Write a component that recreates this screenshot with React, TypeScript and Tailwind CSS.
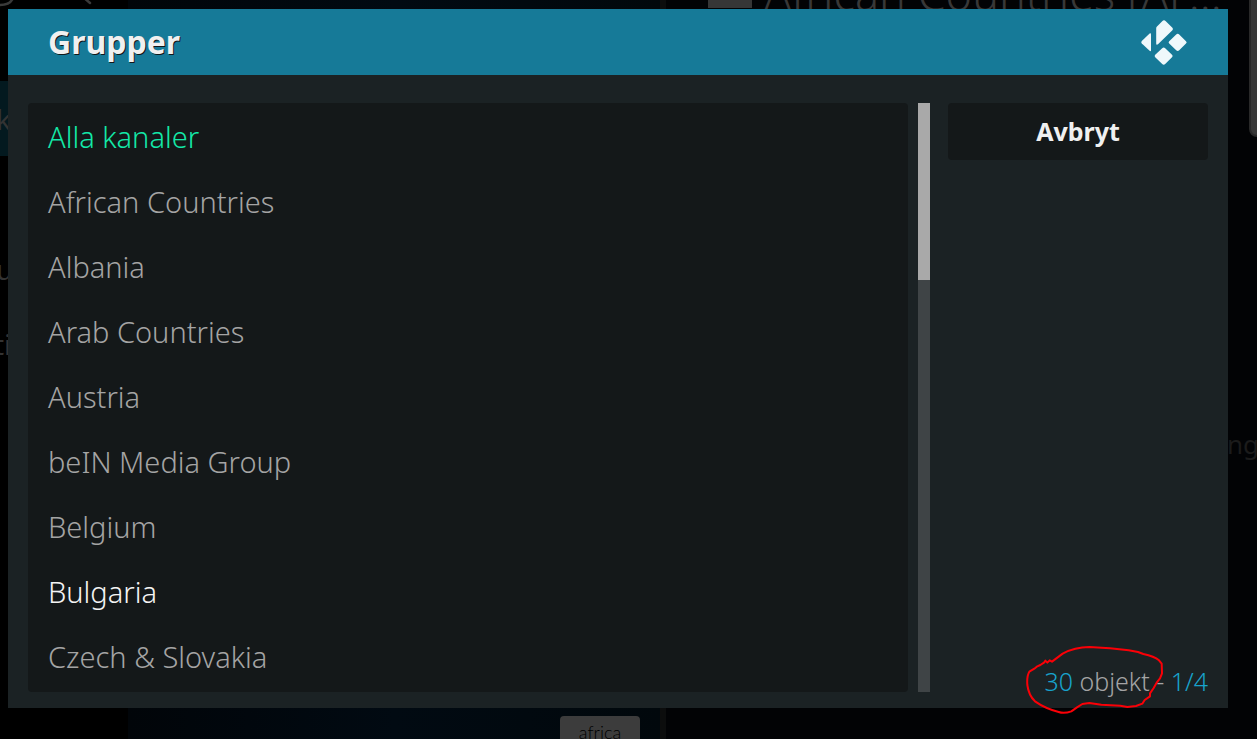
const groups = [
  "Alla kanaler",
  "African Countries",
  "Albania",
  "Arab Countries",
  "Austria",
  "beIN Media Group",
  "Belgium",
  "Bulgaria",
  "Czech & Slovakia",
];

const CURRENT = "Alla kanaler";
const FOCUSED = "Bulgaria";

function rowColor(name: string) {
  if (name === CURRENT) return "text-[#13e8a8]";
  if (name === FOCUSED) return "text-[#f4f4f4]";
  return "text-[#a4a4a4]";
}

function KodiLogo() {
  return (
    <svg viewBox="-1 -2 48 48" className="h-12 w-12" fill="#eff8fb" role="img" aria-label="Kodi">
      <path d="M21.2 1.2Q23 -.8 24.8 1.2L31.4 7.8Q32.6 9 31.4 10.2L17 24.2Q15.2 25.4 15.2 23.4V8.2Q15.2 7.2 16 6.4Z" />
      <path d="M8.6 13.6Q10 12.6 10 14.2V30.2Q10 31.8 8.6 30.8L.8 23.4Q-.4 22.2 .8 21Z" />
      <path d="M35.2 14.6Q36.7 13.1 38.2 14.6L45 21.2Q46.4 22.4 45 23.6L38.2 30.2Q36.7 31.6 35.2 30.2L28.2 23.6Q27 22.4 28.2 21.2Z" />
      <path d="M21.2 28.2Q22.7 26.6 24.2 28.2L31 34.8Q32.4 36 31 37.2L24.2 44Q22.7 45.6 21.2 44L14.2 37.2Q13 36 14.2 34.8Z" />
    </svg>
  );
}

function Backdrop() {
  return (
    <div aria-hidden="true" className="absolute inset-0 flex overflow-hidden bg-black text-[#333333]">
      <div className="relative w-32 overflow-hidden">
        <svg viewBox="0 0 96 8" className="absolute top-0 left-0 h-2 w-24" fill="none" stroke="#3a3a3a" strokeWidth="2.5">
          <path d="M0 5C6 5 11 3 13 -2M83 -3L90 3" strokeLinecap="round" />
        </svg>
        <div className="absolute top-[81px] h-[75px] w-full bg-[#03191f]" />
        <span className="absolute top-[98px] -left-1 text-[28px]">k</span>
        <span className="absolute top-[248px] -left-1 text-[28px]">u</span>
        <span className="absolute top-[323px] -left-1.5 text-[28px]">ti</span>
      </div>
      <div className="relative w-[532px] bg-linear-to-r from-[#010509] via-[#010a12] to-[#01080c]">
        <div className="absolute right-5 bottom-0 flex h-[23px] w-20 justify-center overflow-hidden rounded-t-sm bg-[#3c3c3c]">
          <span className="pt-[3px] font-[Lato] text-[18px] font-light text-black">africa</span>
        </div>
      </div>
      <div className="w-1.5 bg-[#0c0d0d]" />
      <div className="relative flex-1 bg-[#020305]">
        <div className="absolute top-0 left-[42px] h-2 w-[44px] bg-[#363636]" />
        <span className="absolute -top-10 left-[98px] text-[45px] font-light whitespace-nowrap text-[#383838]">
          African Countries [AF...
        </span>
        <div className="absolute -top-5 -right-8 h-[157px] w-10 rounded-lg border-2 border-[#292929] bg-[#383838]" />
        <span className="absolute top-[425px] -right-0.5 text-[26px] text-[#1b1b1b]">ng</span>
      </div>
    </div>
  );
}

export default function App() {
  return (
    <div className="relative flex min-h-screen overflow-hidden bg-black pt-[9px] pr-[29px] pb-[31px] pl-2 font-['Noto_Sans',sans-serif]">
      <Backdrop />
      <section role="dialog" aria-labelledby="dialog-title" className="relative flex flex-1 flex-col bg-[#1b2224]">
        <header className="flex h-[66px] items-center justify-between bg-[#167a98] pr-10 pl-10">
          <h1
            id="dialog-title"
            className="text-[32px] font-bold text-[#f0f0f0] [text-shadow:1px_1px_0_#10181b]"
          >
            Grupper
          </h1>
          <KodiLogo />
        </header>
        <div className="flex flex-1 px-5 pt-7 pb-4">
          <ul className="flex-1 rounded bg-[#141819] pt-px pb-[3px]">
            {groups.map((name) => (
              <li key={name}>
                <button
                  type="button"
                  className={`flex h-[65px] w-full items-center px-5 text-left text-[29px] font-light ${rowColor(name)}`}
                >
                  {name}
                </button>
              </li>
            ))}
          </ul>
          <div className="ml-2.5 w-3 bg-[#3f4446]">
            <div className="h-[30%] bg-[#a9a9a9]" />
          </div>
          <aside className="ml-[18px] flex w-[260px] flex-col justify-between">
            <button
              type="button"
              className="h-[57px] rounded bg-[#141819] text-[25px] font-bold text-[#f0f0f0]"
            >
              Avbryt
            </button>
            <p className="relative text-right text-[25px] leading-[22px] font-light text-[#a4a4a4]">
              <span className="text-[#18a3cc]">30</span> objekt - <span className="text-[#18a3cc]">1/4</span>
              <svg
                viewBox="78 45 414 207"
                className="absolute right-11 -bottom-[22px] h-[69px] w-[138px]"
                fill="none"
                stroke="#fb0007"
                strokeWidth="6"
                strokeLinejoin="round"
                strokeLinecap="round"
                aria-hidden="true"
              >
                <path d="M136 92L142 98L149 91L156 95L188 71Q224 51 268 51L330 55L386 61L414 66L430 72Q463 79 477 91L485 101L486 130L480 145L470 158L461 174L450 190L450 199L434 210L427 221L408 228L382 231L361 227L304 224L268 219L247 222L231 232L214 244Q192 252 176 246Q135 235 105 214Q86 196 82 165Q80 138 88 125L103 116L112 109L121 105L133 97Z" />
              </svg>
            </p>
          </aside>
        </div>
      </section>
    </div>
  );
}
